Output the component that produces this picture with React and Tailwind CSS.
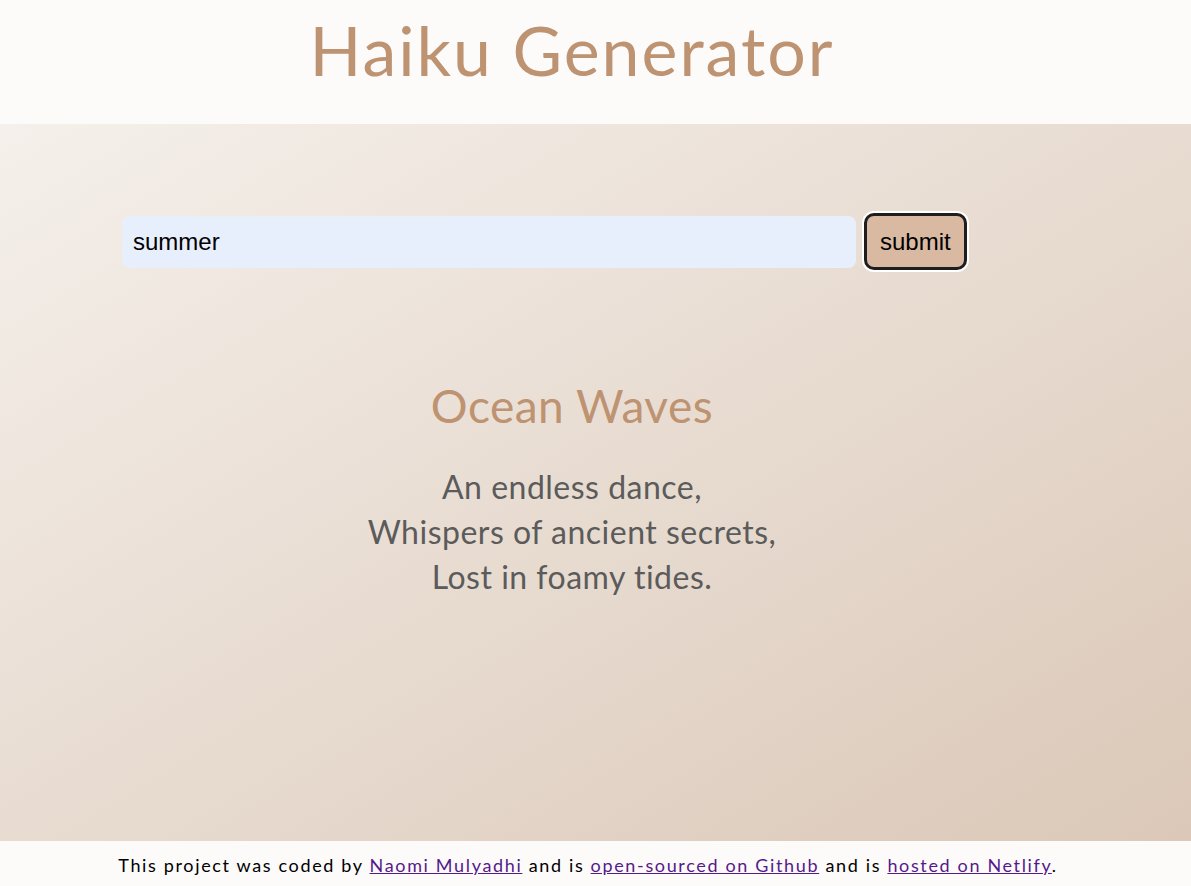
import React, { useState } from 'react';

const poem = ['An endless dance,', 'Whispers of ancient secrets,', 'Lost in foamy tides.'];

const App = () => {
  const [word, setWord] = useState('summer');

  return (
    <div className="min-h-screen flex flex-col bg-[#fdfbfa] font-['Lato',sans-serif]">
      <header className="h-[124px] shrink-0">
        <div className="ml-[122px] w-[900px] text-center">
          <h1 className="pt-[6px] text-[68px] leading-[88px] text-[#bd9371] tracking-[2px]">Haiku Generator</h1>
        </div>
      </header>

      <main className="flex-1 bg-gradient-to-br from-[#f5f0eb] to-[#dbc8b8]">
        <form className="ml-[122px] mt-[89px] flex items-center gap-[8px]" onSubmit={(e) => e.preventDefault()}>
          <input
            type="text"
            value={word}
            onChange={(e) => setWord(e.target.value)}
            className="w-[734px] h-[52px] rounded-[8px] bg-[#e8effc] px-[11px] text-[24px] text-black font-['Liberation_Sans',sans-serif] outline-none"
          />
          <button
            type="submit"
            className="h-[57px] rounded-[10px] border-[3px] border-[#1e1e1e] bg-[#d9b9a1] px-[13px] text-[24px] text-black font-['Liberation_Sans',sans-serif] ring-2 ring-white"
          >
            submit
          </button>
        </form>

        <section className="ml-[122px] w-[900px] mt-[106px] text-center">
          <h2 className="text-[46px] leading-[60px] text-[#bd9371] tracking-[0.5px]">Ocean Waves</h2>
          <div className="mt-[28px] text-[32px] leading-[45px] text-[#5b5b5b] tracking-[0.5px]">
            {poem.map((line) => (
              <div key={line}>{line}</div>
            ))}
          </div>
        </section>
      </main>

      <footer className="h-[45px] shrink-0 flex items-center justify-center pr-[15px] text-[18px] text-black bg-[#fdfbfa] tracking-[1.65px]">
        <p className="pt-[3px]">
          This project was coded by{' '}
          <a href="#" className="underline text-[#551a8b]">Naomi Mulyadhi</a> and is{' '}
          <a href="#" className="underline text-[#551a8b]">open-sourced on Github</a> and is{' '}
          <a href="#" className="underline text-[#551a8b]">hosted on Netlify</a>.
        </p>
      </footer>
    </div>
  );
};

export default App;
